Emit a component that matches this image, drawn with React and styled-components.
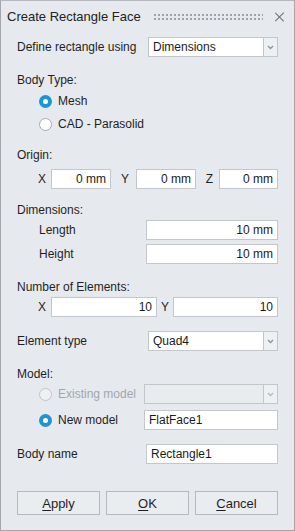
import styled, { createGlobalStyle } from "styled-components"

const Global = createGlobalStyle`
    body {
        margin: 0;
        background: #e6eaee;
        font-family: "Liberation Sans", Arial, sans-serif;
    }
`

const Window = styled.div`
    width: 295px;
    height: 531px;
    box-sizing: border-box;
    border: 1px solid #a3a7ab;
    border-top-color: #b4b8bc;
    background: #e6eaee;
    color: #1f1f1f;
    font-size: 12px;
    display: flex;
    flex-direction: column;
`

const TitleBar = styled.div`
    height: 31px;
    display: flex;
    align-items: center;
    padding-left: 6px;
    padding-right: 6px;
`

const Title = styled.div`
    font-size: 13px;
    color: #222;
`

const Grip = styled.div`
    flex: 1;
    height: 7px;
    margin: 0 12px 0 12px;
    background-image: radial-gradient(circle, #9ea3a8 0.8px, transparent 1.1px);
    background-size: 4px 4px;
    background-position: 0 0;
`

const Close = styled.div`
    width: 10px;
    height: 10px;
    position: relative;
    margin-right: 3px;
    &::before, &::after {
        content: "";
        position: absolute;
        left: 4px;
        top: -1px;
        width: 1.2px;
        height: 12px;
        background: #6a6e72;
        transform: rotate(45deg);
    }
    &::after {
        transform: rotate(-45deg);
    }
`

const Body = styled.div`
    padding: 0 16px 0 16px;
    display: flex;
    flex-direction: column;
`

const Row = styled.div`
    height: ${p => p.$h || 20}px;
    margin-top: ${p => p.$mt || 0}px;
    display: flex;
    align-items: center;
    padding-left: ${p => p.$indent || 0}px;
`

const Label = styled.div`
    width: ${p => p.$w ? p.$w + "px" : "auto"};
    flex-shrink: 0;
    color: ${p => p.$disabled ? "#a2a6aa" : "#1f1f1f"};
    white-space: nowrap;
`

const AxisLabel = styled.div`
    width: ${p => p.$w}px;
    flex-shrink: 0;
    text-align: ${p => p.$align || "left"};
    padding-right: ${p => p.$pr || 0}px;
    box-sizing: border-box;
`

const Input = styled.div`
    flex: ${p => p.$w ? "none" : 1};
    width: ${p => p.$w ? p.$w + "px" : "auto"};
    height: 20px;
    box-sizing: border-box;
    border: 1px solid #c3c7cb;
    background: #fff;
    display: flex;
    align-items: center;
    justify-content: ${p => p.$left ? "flex-start" : "flex-end"};
    padding: 0 4px;
    color: #1a1a1a;
    white-space: nowrap;
`

const Select = styled.div`
    flex: 1;
    height: 20px;
    display: flex;
`

const SelectField = styled.div`
    flex: 1;
    box-sizing: border-box;
    border: 1px solid #c3c7cb;
    background: ${p => p.$disabled ? "#e9ecef" : "#fff"};
    display: flex;
    align-items: center;
    padding: 0 4px;
    color: #1a1a1a;
`

const SelectArrow = styled.div`
    width: 14px;
    box-sizing: border-box;
    border: 1px solid #c3c7cb;
    border-left: none;
    background: #eef1f3;
    display: flex;
    align-items: center;
    justify-content: center;
`

const Radio = styled.div`
    width: 13px;
    height: 13px;
    box-sizing: border-box;
    border-radius: 50%;
    margin-right: 6px;
    flex-shrink: 0;
    ${p => p.$checked
        ? "background: #fff; border: 4px solid #1b96d3;"
        : `background: ${p.$disabled ? "#eef0f2" : "#fff"}; border: 1px solid ${p.$disabled ? "#c0c4c8" : "#a8acb0"};`}
`

const Buttons = styled.div`
    margin-top: 27px;
    display: grid;
    grid-template-columns: 1fr 1fr 1fr;
    gap: 6px;
`

const Button = styled.div`
    height: 24px;
    box-sizing: border-box;
    border: 1px solid #b6babe;
    background: #e9edf0;
    display: flex;
    align-items: center;
    justify-content: center;
    color: #1f1f1f;
    font-size: 13px;
    & u {
        text-decoration: underline;
        text-underline-offset: 2px;
    }
`

const Chevron = ({ color = "#8c9196" }) => (
    <svg width="7" height="5" viewBox="0 0 7 5">
        <path d="M1 1 L3.5 3.5 L6 1" fill="none" stroke={color} strokeWidth="1.3" />
    </svg>
)

const Dropdown = ({ value, disabled }) => (
    <Select>
        <SelectField $disabled={disabled}>{value}</SelectField>
        <SelectArrow>
            <Chevron color={disabled ? "#b4b8bc" : "#8c9196"} />
        </SelectArrow>
    </Select>
)

const App = () => {
    return (
        <Window>
            <Global />
            <TitleBar>
                <Title>Create Rectangle Face</Title>
                <Grip />
                <Close />
            </TitleBar>
            <Body>
                <Row $mt={5}>
                    <Label $w={131}>Define rectangle using</Label>
                    <Dropdown value="Dimensions" />
                </Row>

                <Row $h={16} $mt={15}>
                    <Label>Body Type:</Label>
                </Row>
                <Row $mt={3} $indent={22}>
                    <Radio $checked />
                    <Label>Mesh</Label>
                </Row>
                <Row $mt={3} $indent={22}>
                    <Radio />
                    <Label>CAD - Parasolid</Label>
                </Row>

                <Row $h={16} $mt={13}>
                    <Label>Origin:</Label>
                </Row>
                <Row $mt={6}>
                    <AxisLabel $w={34} $align="right" $pr={5}>X</AxisLabel>
                    <Input $w={60}>0 mm</Input>
                    <AxisLabel $w={25} $align="right" $pr={7}>Y</AxisLabel>
                    <Input $w={60}>0 mm</Input>
                    <AxisLabel $w={23} $align="right" $pr={6}>Z</AxisLabel>
                    <Input>0 mm</Input>
                </Row>

                <Row $h={16} $mt={13}>
                    <Label>Dimensions:</Label>
                </Row>
                <Row $mt={2} $indent={22}>
                    <Label $w={107}>Length</Label>
                    <Input>10 mm</Input>
                </Row>
                <Row $mt={4} $indent={22}>
                    <Label $w={107}>Height</Label>
                    <Input>10 mm</Input>
                </Row>

                <Row $h={16} $mt={15}>
                    <Label>Number of Elements:</Label>
                </Row>
                <Row $mt={2}>
                    <AxisLabel $w={34} $align="right" $pr={5}>X</AxisLabel>
                    <Input $w={106}>10</Input>
                    <AxisLabel $w={16} $align="right" $pr={4}>Y</AxisLabel>
                    <Input>10</Input>
                </Row>

                <Row $mt={14}>
                    <Label $w={131}>Element type</Label>
                    <Dropdown value="Quad4" />
                </Row>

                <Row $h={16} $mt={15}>
                    <Label>Model:</Label>
                </Row>
                <Row $mt={2} $indent={22}>
                    <Radio $disabled />
                    <Label $w={86} $disabled>Existing model</Label>
                    <Dropdown value="" disabled />
                </Row>
                <Row $mt={6} $indent={22}>
                    <Radio $checked />
                    <Label $w={86}>New model</Label>
                    <Input $left>FlatFace1</Input>
                </Row>

                <Row $mt={14}>
                    <Label $w={129}>Body name</Label>
                    <Input $left>Rectangle1</Input>
                </Row>

                <Buttons>
                    <Button><span><u>A</u>pply</span></Button>
                    <Button><span><u>O</u>K</span></Button>
                    <Button><span><u>C</u>ancel</span></Button>
                </Buttons>
            </Body>
        </Window>
    )
}

export default App
